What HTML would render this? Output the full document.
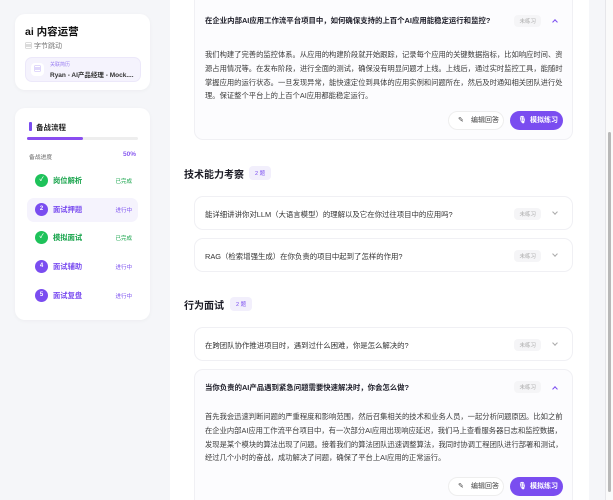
<!DOCTYPE html>
<html><head><meta charset="utf-8"><style>
*{box-sizing:border-box;margin:0;padding:0}
html,body{width:613px;height:500px;overflow:hidden}
body{background:#f5f6f9;font-family:"Liberation Sans","Noto Sans CJK SC",sans-serif;color:#222;position:relative}
.abs{position:absolute}
.card{position:absolute;background:#fff;border-radius:10px;box-shadow:0 1px 4px rgba(0,0,0,.04)}
.main{position:absolute;left:170px;top:0;width:419px;height:500px;background:#fff}
.q{position:absolute;left:194px;width:379px;border:1px solid #f0f0f4;border-radius:9px;background:#fff;overflow:hidden}
.q.open{background:#fcfcfe}
.qt{position:absolute;left:10px;font-size:7.4px;color:#333;white-space:nowrap}
.qt.b{font-weight:bold;color:#1f1f2a}
.tag{position:absolute;right:31px;font-size:5.5px;color:#aaa;background:#f5f5f7;border-radius:4px;padding:2px 5px}
.chev{position:absolute;right:15px;width:4px;height:4px;border-right:1px solid #aaa;border-bottom:1px solid #aaa}
.chev.up{border-color:#7a4df0}
.ans{position:absolute;left:10px;width:360px;font-size:7.3px;line-height:13.8px;color:#3a3a3a}
.btn1{position:absolute;width:56px;height:19px;border:1px solid #eee;border-radius:10px;background:#fff;font-size:7px;color:#444;line-height:17px;padding-left:22px}
.btn2{position:absolute;width:53px;height:19px;border-radius:10px;background:#7a4df0;font-size:7px;color:#fff;font-weight:bold;line-height:19px;padding-left:20px}
.sec{position:absolute;left:184px;font-size:10px;font-weight:bold;color:#1a1a24}
.badge{position:absolute;font-size:5.5px;color:#7a4df0;background:#f2effc;border-radius:4px;padding:3px 6px}
.step{position:absolute;left:27px;width:111px;height:24px;border-radius:7px}
.step .c{position:absolute;left:8px;top:5px;width:13px;height:13px;border-radius:50%;color:#fff;font-size:6px;text-align:center;line-height:13px;font-weight:bold}
.step .n{position:absolute;left:26px;top:7px;font-size:7.3px;font-weight:bold}
.step .s{position:absolute;right:6px;top:8px;font-size:5.5px}
.g .c{background:#1ec25a}.g .n,.g .s{color:#16a34a}
.p .c{background:#7a4df0}.p .n,.p .s{color:#7a4df0}
</style></head><body>
<div class="card" style="left:15px;top:14px;width:135px;height:76px">
 <div class="abs" style="left:10px;top:10px;font-size:10.5px;font-weight:bold;color:#111">ai 内容运营</div>
 <div class="abs" style="left:10px;top:27px;font-size:7px;color:#777">▤ 字节跳动</div>
 <div class="abs" style="left:10px;top:43px;width:116px;height:25px;background:#f5f3fd;border:1px solid #ece8fa;border-radius:7px">
  <div class="abs" style="left:5px;top:5px;width:13px;height:13px;background:#fff;border-radius:4px;font-size:7px;color:#8a6cf0;text-align:center;line-height:13px">▤</div>
  <div class="abs" style="left:24px;top:3px;font-size:5px;color:#9a7ff2">关联简历</div>
  <div class="abs" style="left:24px;top:11px;font-size:6.5px;font-weight:bold;color:#333;white-space:nowrap">Ryan - AI产品经理 - Mock....</div>
 </div>
</div>
<div class="card" style="left:15px;top:108px;width:135px;height:212px">
 <div class="abs" style="left:14px;top:14px;width:3px;height:9px;background:#7a4df0;border-radius:1px"></div>
 <div class="abs" style="left:21px;top:14px;font-size:7.5px;font-weight:bold;color:#222">备战流程</div>
 <div class="abs" style="left:12px;top:29px;width:111px;height:3px;background:#eee;border-radius:2px"><div style="width:56px;height:3px;background:#8a4df0;border-radius:2px"></div></div>
 <div class="abs" style="left:14px;top:44px;font-size:5.8px;color:#666">备战进度</div>
 <div class="abs" style="right:14px;top:43px;font-size:6.5px;font-weight:bold;color:#8a5cf0">50%</div>
</div>
<div class="step g" style="top:169px"><div class="c">✓</div><div class="n">岗位解析</div><div class="s">已完成</div></div>
<div class="step p" style="top:198px;background:#f5f3fd"><div class="c">2</div><div class="n">面试押题</div><div class="s">进行中</div></div>
<div class="step g" style="top:226px"><div class="c">✓</div><div class="n">模拟面试</div><div class="s">已完成</div></div>
<div class="step p" style="top:255px"><div class="c">4</div><div class="n">面试辅助</div><div class="s">进行中</div></div>
<div class="step p" style="top:284px"><div class="c">5</div><div class="n">面试复盘</div><div class="s">进行中</div></div>

<div class="main"></div>
<div class="abs" style="left:605px;top:0;width:1px;height:500px;background:#e6e6ea"></div>
<div class="abs" style="left:606px;top:0;width:7px;height:500px;background:#fafafa"></div>
<div class="abs" style="left:608px;top:132px;width:3px;height:360px;background:#b8b8b8;border-radius:2px"></div>

<div class="q open" style="top:-10px;height:150px">
 <div class="qt b" style="top:24px">在企业内部AI应用工作流平台项目中，如何确保支持的上百个AI应用能稳定运行和监控?</div>
 <div class="tag" style="top:24px">未练习</div>
 <div class="chev up" style="top:29px;transform:rotate(-135deg)"></div>
 <div class="ans" style="top:57px">我们构建了完善的监控体系。从应用的构建阶段就开始跟踪，记录每个应用的关键数据指标，比如响应时间、资源占用情况等。在发布阶段，进行全面的测试，确保没有明显问题才上线。上线后，通过实时监控工具，能随时掌握应用的运行状态。一旦发现异常，能快速定位到具体的应用实例和问题所在，然后及时通知相关团队进行处理。保证整个平台上的上百个AI应用都能稳定运行。</div>
 <div class="btn1" style="left:253px;top:120px"><span class="abs" style="left:9px;top:0">✎</span>编辑回答</div>
 <div class="btn2" style="left:315px;top:120px"><span class="abs" style="left:8px;top:0">🎙</span>模拟练习</div>
</div>

<div class="sec" style="top:166px">技术能力考察</div>
<div class="badge" style="left:249px;top:166px">2 题</div>
<div class="q" style="top:196px;height:34px"><div class="qt" style="top:12px">能详细讲讲你对LLM（大语言模型）的理解以及它在你过往项目中的应用吗?</div><div class="tag" style="top:11px">未练习</div><div class="chev" style="top:13px;transform:rotate(45deg)"></div></div>
<div class="q" style="top:238px;height:34px"><div class="qt" style="top:12px">RAG（检索增强生成）在你负责的项目中起到了怎样的作用?</div><div class="tag" style="top:11px">未练习</div><div class="chev" style="top:13px;transform:rotate(45deg)"></div></div>

<div class="sec" style="top:297px">行为面试</div>
<div class="badge" style="left:230px;top:297px">2 题</div>
<div class="q" style="top:327px;height:34px"><div class="qt" style="top:12px">在跨团队协作推进项目时，遇到过什么困难，你是怎么解决的?</div><div class="tag" style="top:11px">未练习</div><div class="chev" style="top:13px;transform:rotate(45deg)"></div></div>
<div class="q open" style="top:369px;height:140px">
 <div class="qt b" style="top:12px">当你负责的AI产品遇到紧急问题需要快速解决时，你会怎么做?</div>
 <div class="tag" style="top:11px">未练习</div>
 <div class="chev up" style="top:17px;transform:rotate(-135deg)"></div>
 <div class="ans" style="top:40px">首先我会迅速判断问题的严重程度和影响范围，然后召集相关的技术和业务人员，一起分析问题原因。比如之前在企业内部AI应用工作流平台项目中，有一次部分AI应用出现响应延迟，我们马上查看服务器日志和监控数据，发现是某个模块的算法出现了问题。接着我们的算法团队迅速调整算法，我同时协调工程团队进行部署和测试，经过几个小时的奋战，成功解决了问题，确保了平台上AI应用的正常运行。</div>
 <div class="btn1" style="left:253px;top:107px"><span class="abs" style="left:9px;top:0">✎</span>编辑回答</div>
 <div class="btn2" style="left:315px;top:107px"><span class="abs" style="left:8px;top:0">🎙</span>模拟练习</div>
</div>
</body></html>
